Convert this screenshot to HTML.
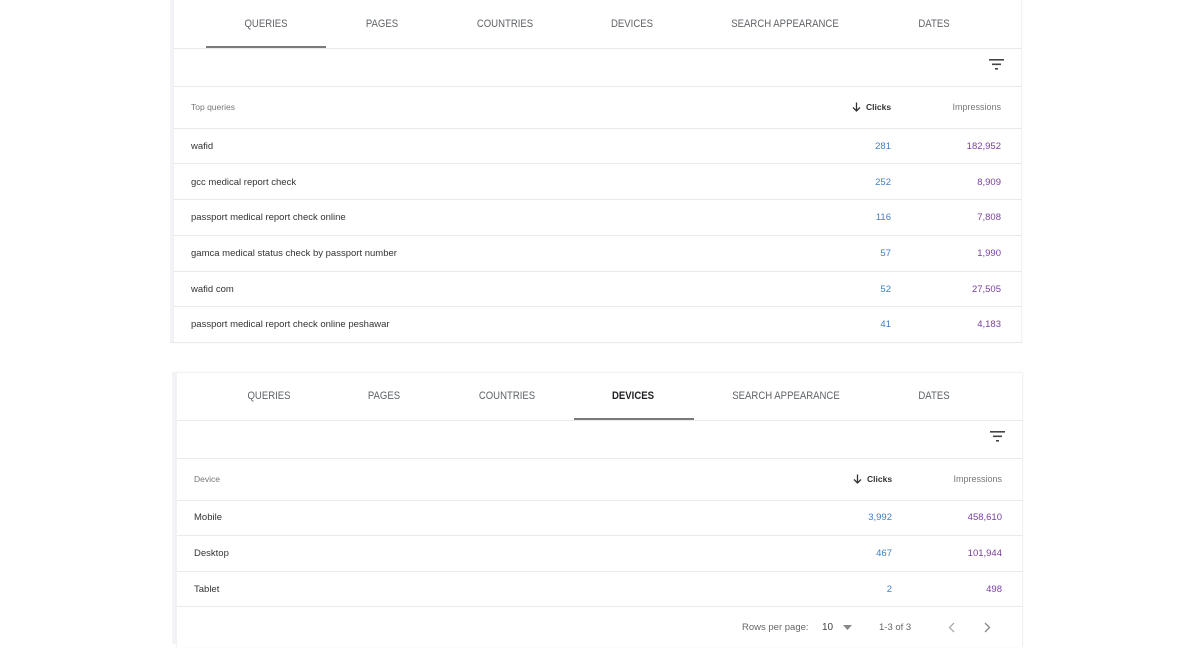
<!DOCTYPE html>
<html><head><meta charset="utf-8"><style>
*{margin:0;padding:0;box-sizing:border-box}
body{width:1200px;height:670px;background:#fff;font-family:"Liberation Sans",Arial,sans-serif;position:relative;overflow:hidden}
.card{position:absolute;background:#fff;border:1px solid #f1f2f5;box-shadow:0 0 2px rgba(0,0,0,0.04)}
.strip{position:absolute;background:#f3f4f7}
.t{position:absolute;font-size:11px;color:#5f6368;transform:translateX(-50%) scaleX(0.87);white-space:nowrap}
.t.b{color:#202124;font-weight:bold}
.line{position:absolute;height:1px;background:#e9eaec}
.ul{position:absolute;height:2px;background:#7a7a7a}
.txt{position:absolute;font-size:9.5px;color:#333;white-space:nowrap}
.hd{position:absolute;font-size:8.5px;color:#777;white-space:nowrap}
.hdi{position:absolute;font-size:9px;color:#777;white-space:nowrap;width:100px;text-align:right}
.hdb{position:absolute;font-size:8.5px;color:#333;font-weight:bold;white-space:nowrap}
.c{position:absolute;font-size:9.5px;color:#3f7fc4;text-align:right;width:80px}
.i{position:absolute;font-size:9.5px;color:#7a3f9e;text-align:right;width:100px}
svg{position:absolute}
</style></head><body>

<!-- TOP CARD -->
<div class="strip" style="left:170px;top:0;width:4px;height:343px"></div>
<div class="card" style="left:173px;top:-2px;width:849px;height:345px"></div>
<div class="t" style="left:266px;top:18px">QUERIES</div>
<div class="t" style="left:382px;top:18px">PAGES</div>
<div class="t" style="left:505px;top:18px">COUNTRIES</div>
<div class="t" style="left:632px;top:18px">DEVICES</div>
<div class="t" style="left:785px;top:18px">SEARCH APPEARANCE</div>
<div class="t" style="left:934px;top:18px">DATES</div>
<div class="line" style="left:174px;top:48px;width:848px"></div>
<div class="ul" style="left:206px;top:46px;width:120px"></div>
<svg style="left:989px;top:59px" width="15" height="11" viewBox="0 0 15 11"><rect x="0" y="0" width="15" height="1.6" fill="#444"/><rect x="3" y="4.5" width="9" height="1.6" fill="#444"/><rect x="6" y="9" width="3" height="1.6" fill="#444"/></svg>
<div class="line" style="left:174px;top:86px;width:848px"></div>
<div class="hd" style="left:191px;top:102px">Top queries</div>
<svg style="left:852px;top:102px" width="9" height="10" viewBox="0 0 9 10"><path d="M4.5 0.5V9M1 5.5L4.5 9L8 5.5" stroke="#333" stroke-width="1.3" fill="none"/></svg>
<div class="hdb" style="left:866px;top:102px">Clicks</div>
<div class="hdi" style="left:901px;top:102px">Impressions</div>
<div class="line" style="left:174px;top:128px;width:848px"></div>

<div class="txt" style="left:191px;top:141px">wafid</div><div class="c" style="left:811px;top:141px">281</div><div class="i" style="left:901px;top:141px">182,952</div>
<div class="line" style="left:174px;top:163px;width:848px"></div>
<div class="txt" style="left:191px;top:177px">gcc medical report check</div><div class="c" style="left:811px;top:177px">252</div><div class="i" style="left:901px;top:177px">8,909</div>
<div class="line" style="left:174px;top:199px;width:848px"></div>
<div class="txt" style="left:191px;top:212px">passport medical report check online</div><div class="c" style="left:811px;top:212px">116</div><div class="i" style="left:901px;top:212px">7,808</div>
<div class="line" style="left:174px;top:235px;width:848px"></div>
<div class="txt" style="left:191px;top:248px">gamca medical status check by passport number</div><div class="c" style="left:811px;top:248px">57</div><div class="i" style="left:901px;top:248px">1,990</div>
<div class="line" style="left:174px;top:271px;width:848px"></div>
<div class="txt" style="left:191px;top:284px">wafid com</div><div class="c" style="left:811px;top:284px">52</div><div class="i" style="left:901px;top:284px">27,505</div>
<div class="line" style="left:174px;top:306px;width:848px"></div>
<div class="txt" style="left:191px;top:319px">passport medical report check online peshawar</div><div class="c" style="left:811px;top:319px">41</div><div class="i" style="left:901px;top:319px">4,183</div>
<div class="line" style="left:170px;top:342px;width:852px"></div>

<!-- BOTTOM CARD -->
<div class="strip" style="left:172px;top:372px;width:5px;height:272px"></div>
<div class="card" style="left:176px;top:372px;width:847px;height:275px;border-bottom:none"></div>
<div class="t" style="left:269px;top:390px">QUERIES</div>
<div class="t" style="left:384px;top:390px">PAGES</div>
<div class="t" style="left:507px;top:390px">COUNTRIES</div>
<div class="t b" style="left:633px;top:390px">DEVICES</div>
<div class="t" style="left:786px;top:390px">SEARCH APPEARANCE</div>
<div class="t" style="left:934px;top:390px">DATES</div>
<div class="line" style="left:177px;top:420px;width:846px"></div>
<div class="ul" style="left:574px;top:418px;width:120px"></div>
<svg style="left:990px;top:431px" width="15" height="11" viewBox="0 0 15 11"><rect x="0" y="0" width="15" height="1.6" fill="#444"/><rect x="3" y="4.5" width="9" height="1.6" fill="#444"/><rect x="6" y="9" width="3" height="1.6" fill="#444"/></svg>
<div class="line" style="left:177px;top:458px;width:846px"></div>
<div class="hd" style="left:194px;top:474px">Device</div>
<svg style="left:853px;top:474px" width="9" height="10" viewBox="0 0 9 10"><path d="M4.5 0.5V9M1 5.5L4.5 9L8 5.5" stroke="#333" stroke-width="1.3" fill="none"/></svg>
<div class="hdb" style="left:867px;top:474px">Clicks</div>
<div class="hdi" style="left:902px;top:474px">Impressions</div>
<div class="line" style="left:177px;top:500px;width:846px"></div>
<div class="txt" style="left:194px;top:512px">Mobile</div><div class="c" style="left:812px;top:512px">3,992</div><div class="i" style="left:902px;top:512px">458,610</div>
<div class="line" style="left:177px;top:535px;width:846px"></div>
<div class="txt" style="left:194px;top:548px">Desktop</div><div class="c" style="left:812px;top:548px">467</div><div class="i" style="left:902px;top:548px">101,944</div>
<div class="line" style="left:177px;top:571px;width:846px"></div>
<div class="txt" style="left:194px;top:584px">Tablet</div><div class="c" style="left:812px;top:584px">2</div><div class="i" style="left:902px;top:584px">498</div>
<div class="line" style="left:177px;top:606px;width:846px"></div>

<div class="txt" style="left:742px;top:622px;color:#666;font-size:9.5px">Rows per page:</div>
<div class="txt" style="left:822px;top:622px;color:#444;font-size:10px">10</div>
<svg style="left:843px;top:625px" width="9" height="5" viewBox="0 0 9 5"><path d="M0 0H9L4.5 5Z" fill="#888"/></svg>
<div class="txt" style="left:879px;top:622px;color:#666;font-size:9.5px">1-3 of 3</div>
<svg style="left:948px;top:622px" width="7" height="11" viewBox="0 0 7 11"><path d="M6 1L1.5 5.5L6 10" stroke="#aaa" stroke-width="1.3" fill="none"/></svg>
<svg style="left:984px;top:622px" width="7" height="11" viewBox="0 0 7 11"><path d="M1 1L5.5 5.5L1 10" stroke="#888" stroke-width="1.3" fill="none"/></svg>
</body></html>
